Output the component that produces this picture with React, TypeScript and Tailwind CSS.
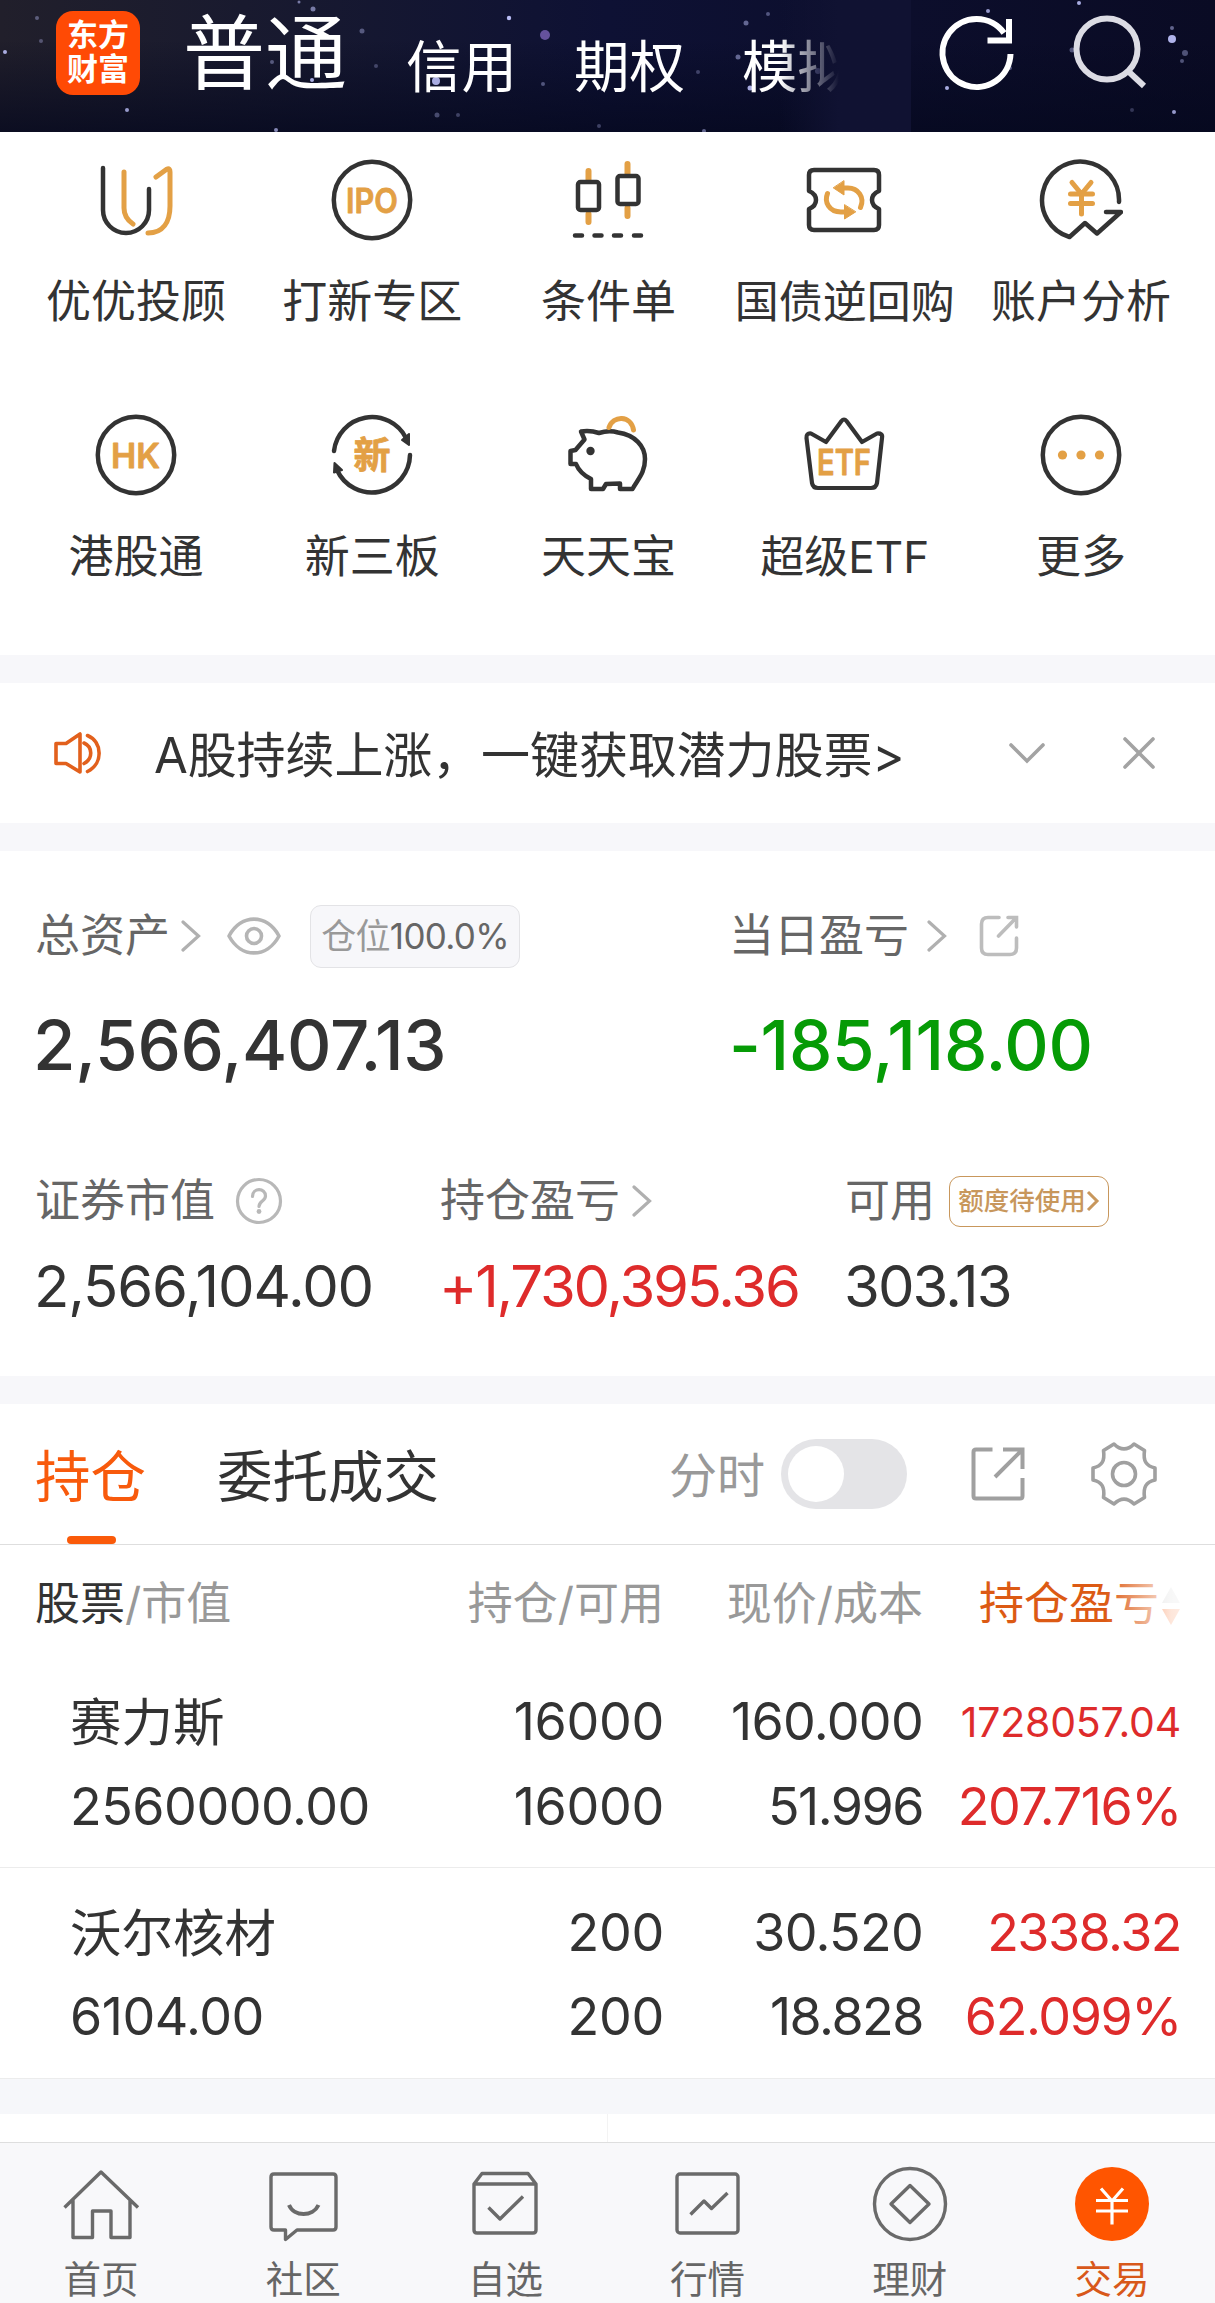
import type { ReactNode } from 'react';
import clsx from 'clsx';

interface Holding {
    name: string;
    value: string;
    held: string;
    usable: string;
    price: string;
    cost: string;
    profit: string;
    ratio: string;
    compact?: boolean;
}

const DARK = '#333333';
const GOLD = '#e3a045';

const holdings: Holding[] = [
    {
        name: '赛力斯',
        value: '2560000.00',
        held: '16000',
        usable: '16000',
        price: '160.000',
        cost: '51.996',
        profit: '1728057.04',
        ratio: '207.716%',
        compact: true,
    },
    {
        name: '沃尔核材',
        value: '6104.00',
        held: '200',
        usable: '200',
        price: '30.520',
        cost: '18.828',
        profit: '2338.32',
        ratio: '62.099%',
    },
];

// x, y, radius, opacity
const stars: [number, number, number, number][] = [
    [5, 52, 2, 0.9], [37, 18, 2, 0.4], [41, 41, 2, 0.35], [127, 110, 2, 0.8], [276, 130, 2, 0.7],
    [313, 9, 2.5, 0.6], [299, 2, 1.5, 0.6], [362, 31, 2.5, 0.4], [312, 80, 2, 0.9], [272, 62, 2, 0.4],
    [509, 18, 2.2, 1], [436, 81, 4, 0.9], [543, 84, 2, 0.4], [437, 115, 2.5, 0.35], [458, 115, 2, 0.3],
    [599, 126, 2, 0.3], [746, 23, 2.5, 0.5], [768, 14, 2, 0.4], [738, 57, 2.5, 0.5], [750, 88, 2.5, 0.9],
    [698, 72, 2, 0.3], [704, 131, 2, 0.5], [818, 71, 3, 0.6], [988, 11, 2, 0.8], [1079, 3, 2, 0.9],
    [947, 88, 2, 0.9], [1172, 39, 4, 0.95], [1172, 28, 2, 0.5], [1185, 53, 3, 0.4], [1182, 61, 2, 0.4],
    [1174, 112, 2, 0.8], [1072, 50, 2.5, 0.4], [1132, 110, 2, 0.25], [1010, 68, 2, 0.4], [376, 66, 2, 0.3],
];

function MenuIcon({ children }: { children: ReactNode }) {
    return (
        <svg width="84" height="84" viewBox="0 0 84 84" fill="none" stroke={DARK} strokeWidth="4.5" strokeLinecap="round" strokeLinejoin="round">
            {children}
        </svg>
    );
}

function IconText({ x, y, size, width, children }: { x: number; y: number; size: number; width: number; children: string }) {
    return (
        <text
            x={x}
            y={y}
            fill={GOLD}
            stroke={GOLD}
            strokeWidth="0.8"
            fontSize={size}
            textLength={width}
            lengthAdjust="spacingAndGlyphs"
            className="font-semibold"
        >
            {children}
        </text>
    );
}

const menus: { label: string; icon: ReactNode }[] = [
    {
        label: '优优投顾',
        icon: (
            <>
                <path d="M9 10V52A23 23 0 0 0 55 52V31" />
                <g stroke={GOLD} strokeWidth="5">
                    <path d="M30 14V50C30 57 33 62 39 66" />
                    <path d="M62 19L73 11Q76 10 76 14V48C76 64 69 75 54 75" />
                </g>
            </>
        ),
    },
    {
        label: '打新专区',
        icon: (
            <>
                <circle cx="42" cy="42" r="38.2" />
                <IconText x={16} y={54.5} size={34} width={52}>IPO</IconText>
            </>
        ),
    },
    {
        label: '条件单',
        icon: (
            <>
                <g stroke={GOLD} strokeWidth="6">
                    <path d="M22.5 13V22M22.5 56V64" />
                    <path d="M61.5 6V16M61.5 50V58" />
                </g>
                <rect x="12" y="24" width="21" height="28" rx="2.5" />
                <rect x="51.5" y="18" width="21" height="28" rx="2.5" />
                <path d="M9 77.5h7M28.5 77.5h7M48 77.5h7M68 77.5h7" />
            </>
        ),
    },
    {
        label: '国债逆回购',
        icon: (
            <>
                <path d="M11 12H71Q76 12 76 17V33Q69 36 69 42Q69 48 76 51V67Q76 72 71 72H11Q6 72 6 67V51Q13 48 13 42Q13 36 6 33V17Q6 12 11 12Z" />
                <g stroke={GOLD} strokeWidth="5">
                    <path d="M39 30H45C55 30 62 39 57.5 49.5" />
                    <path d="M43 54H38C26 54 21 44 24.5 35.5" />
                </g>
                <path d="M41 23V37L30.5 30Z" fill={GOLD} stroke={GOLD} strokeWidth="1" />
                <path d="M41.5 47V61L52.5 54Z" fill={GOLD} stroke={GOLD} strokeWidth="1" />
            </>
        ),
    },
    {
        label: '账户分析',
        icon: (
            <>
                <path d="M80 44A38.5 38.5 0 1 0 30.5 79L46 65L58 75.5L82 54H67" />
                <g stroke={GOLD} strokeWidth="5">
                    <path d="M33 24.5L42.5 36L52 24.5M42.5 36V56" />
                    <path d="M31.5 36H53.5M31.5 45.5H53.5" />
                </g>
            </>
        ),
    },
    {
        label: '港股通',
        icon: (
            <>
                <circle cx="42" cy="42" r="38.2" />
                <IconText x={17} y={54.5} size={34} width={49}>HK</IconText>
            </>
        ),
    },
    {
        label: '新三板',
        icon: (
            <>
                <path d="M4 38A38.2 38.2 0 0 1 76 25" />
                <path d="M80 42A38.2 38.2 0 0 1 7 57" />
                <path d="M79 21V32L72 27Z" fill={DARK} strokeWidth="2" />
                <path d="M4.5 50L12 57L4 59.5Z" fill={DARK} strokeWidth="2" />
                <IconText x={23.5} y={55.5} size={37} width={37}>新</IconText>
            </>
        ),
    },
    {
        label: '天天宝',
        icon: (
            <>
                <path d="M4.5 38L9.5 37L18.5 26.5L15 18.5Q24 17 33 20Q43 17 52 19.5C69 22 79 33 79 46C79 60 72 66 66.5 76H54V70.5L40 71L37 76H25V66C17 62 12 56 10 51H4.5Z" />
                <circle cx="24.5" cy="38" r="4.2" fill={DARK} stroke="none" />
                <path d="M43 14.5C47 2 65 2 67.5 17" stroke={GOLD} strokeWidth="5" />
            </>
        ),
    },
    {
        label: '超级ETF',
        icon: (
            <>
                <path d="M8 20.5L23 29L38.5 8Q41 5 43.5 8L59 29L74 20.5Q80 20 79 25L74 70Q73 75 68 75H15Q10 75 9 70L3.5 25Q3 20 8 20.5Z" strokeWidth="4.2" />
                <IconText x={14} y={62} size={36} width={54}>ETF</IconText>
            </>
        ),
    },
    {
        label: '更多',
        icon: (
            <>
                <circle cx="42" cy="42" r="38.2" />
                <g fill={GOLD} stroke="none">
                    <circle cx="23.5" cy="42" r="4.6" />
                    <circle cx="42" cy="42" r="4.6" />
                    <circle cx="60.5" cy="42" r="4.6" />
                </g>
            </>
        ),
    },
];

const navs: { label: string; icon: ReactNode; active?: boolean }[] = [
    {
        label: '首页',
        icon: <path d="M3.5 43.5L40 8L77 43.5M12 36V73.5H31.5V47H50V73.5H69V36" strokeLinecap="butt" />,
    },
    {
        label: '社区',
        icon: (
            <>
                <path d="M11 10H70Q73 10 73 13V63Q73 66 70 66H34L22.5 75.5V66H11Q8 66 8 63V13Q8 10 11 10Z" />
                <path d="M26 41C31 53 50 53 55.5 41" strokeWidth="4" strokeLinecap="butt" />
            </>
        ),
    },
    {
        label: '自选',
        icon: (
            <>
                <path d="M9 20L17 9.5H63L71 20V66Q71 69 68 69H12Q9 69 9 66ZM9 20H71" />
                <path d="M23.5 43.5L35 55L58 32.5" />
            </>
        ),
    },
    {
        label: '行情',
        icon: (
            <>
                <rect x="9" y="10" width="61" height="59" rx="3" />
                <path d="M22.5 50.5L36 37L43.5 44.5L59.5 29" />
            </>
        ),
    },
    {
        label: '理财',
        icon: (
            <>
                <circle cx="40" cy="40" r="35.5" />
                <path d="M40 21.5L59 40L40 58.5L21 40Z" />
            </>
        ),
    },
    {
        label: '交易',
        active: true,
        icon: (
            <>
                <circle cx="40" cy="40" r="37" fill="#ff5500" stroke="none" />
                <path d="M29 24.5L40 37L51 24.5M24 36.5H56M24 47H56M40 37V60.5" stroke="#ffffff" strokeWidth="3.2" strokeLinecap="butt" />
            </>
        ),
    },
];

function ChevronRight() {
    return (
        <svg width="20" height="32" viewBox="0 0 20 32" fill="none" stroke="#b0b0b0" strokeWidth="3.2" strokeLinecap="round">
            <path d="M2 2L17.5 16L2 30" />
        </svg>
    );
}

function Header() {
    return (
        <header className="relative h-[132px] overflow-hidden bg-linear-to-r from-[#211f2b] via-[#0e1134] to-[#0a0b24]">
            <svg className="absolute inset-0" width="1215" height="132">
                <defs>
                    <linearGradient id="shade" x1="0" y1="0" x2="0" y2="1">
                        <stop offset="0.3" stopColor="#05081e" stopOpacity="0" />
                        <stop offset="1" stopColor="#05081e" stopOpacity="0.75" />
                    </linearGradient>
                </defs>
                <rect width="1215" height="132" fill="url(#shade)" />
                {stars.map(([x, y, r, o]) => (
                    <circle key={`${x}-${y}`} cx={x} cy={y} r={r} fill="#b9bdf5" opacity={o} />
                ))}
                <circle cx="545" cy="35" r="5" fill="#7a63b8" opacity="0.8" />
            </svg>
            <div className="relative flex h-full text-white">
                <div className="mt-[11px] ml-14 flex size-[84px] flex-col items-center justify-center rounded-[17px] bg-[#ff4a05] pb-[2px] text-[31px] leading-[34px] font-bold">
                    <span>东方</span>
                    <span>财富</span>
                </div>
                <span className="mt-[13px] ml-[43px] text-[82px] leading-[82px]">普通</span>
                <span className="mt-[37px] ml-[59px] text-[55.5px] leading-[60px]">信用</span>
                <span className="mt-[37px] ml-[57px] text-[55.5px] leading-[60px]">期权</span>
                <span className="mt-[37px] ml-[57px] text-[55.5px] leading-[60px]">模拟</span>
            </div>
            <div className="absolute top-0 left-[780px] h-full w-[131px] bg-linear-to-r from-transparent via-[#101232] via-45% to-[#101232]" />
            <svg className="absolute top-0 left-[930px]" width="230" height="110" viewBox="0 0 230 110" fill="none" stroke="#ffffff" strokeWidth="6">
                <path d="M80.5 54A34 34 0 1 1 74 33" />
                <path d="M79 19V40.5H57.5" />
                <g stroke="#dcdce4">
                    <circle cx="177" cy="49" r="30.5" />
                    <path d="M198 71L214 86" />
                </g>
            </svg>
        </header>
    );
}

function MenuGrid() {
    return (
        <section className="grid h-[523px] grid-cols-5 content-start gap-y-[54px] pt-[26px] pr-4 pl-[18px]">
            {menus.map((m) => (
                <div key={m.label} className="flex h-[201px] flex-col items-center">
                    <MenuIcon>{m.icon}</MenuIcon>
                    <span className={clsx('mt-7 leading-[64px] whitespace-nowrap', m.label.length > 4 ? 'text-[44px]' : 'text-[45px]')}>{m.label}</span>
                </div>
            ))}
        </section>
    );
}

function Notice() {
    return (
        <section className="relative flex h-[140px] items-center">
            <svg className="ml-[52px] shrink-0" width="52" height="48" viewBox="0 0 52 48" fill="none" stroke="#e2601c" strokeWidth="3.6" strokeLinecap="round">
                <path d="M4 14.5H14L28 5V43L14 34.5H4Z" strokeLinejoin="round" />
                <path d="M32 14C41 18 41 30 32 34.5" />
                <path d="M35.5 6.5C51 13 51 35 35.5 42.5" />
            </svg>
            <span className="mt-[5px] ml-[50px] text-[49px] tracking-[-0.1px]">A股持续上涨，一键获取潜力股票&gt;</span>
            <svg className="absolute left-[1005px]" width="154" height="40" viewBox="0 0 154 40" fill="none" stroke="#a3a3a3" strokeWidth="3.6" strokeLinecap="round">
                <path d="M6 12L22 28L38 12" />
                <path d="M120 6L148 34M148 6L120 34" />
            </svg>
        </section>
    );
}

function Assets() {
    return (
        <section className="h-[525px] pt-[53px] text-[45px] text-[#666]">
            <div className="flex h-16">
                <div className="flex w-[695px] items-center pl-[35px]">
                    <span>总资产</span>
                    <span className="ml-[11px]"><ChevronRight /></span>
                    <svg className="ml-[26px]" width="54" height="40" viewBox="0 0 54 40" fill="none" stroke="#b5b5b5" strokeWidth="3.6">
                        <path d="M2 20C14 -2.5 40 -2.5 52 20C40 42.5 14 42.5 2 20Z" strokeLinejoin="round" />
                        <circle cx="27" cy="20" r="7.5" />
                    </svg>
                    <span className="ml-[29px] flex h-[63px] w-[210px] items-center justify-center rounded-[11px] border border-[#e3e3e6] bg-[#f7f7fa] text-[35px] tracking-[-0.7px]">
                        <span className="text-[#999]">仓位</span>100.0%
                    </span>
                </div>
                <div className="flex items-center pl-[34px]">
                    <span>当日盈亏</span>
                    <span className="ml-[18px]"><ChevronRight /></span>
                    <svg className="ml-[32px]" width="40" height="42" viewBox="0 0 40 42" fill="none" stroke="#bdbdbd" strokeWidth="3.6" strokeLinecap="round">
                        <path d="M20 2.5H9Q2.5 2.5 2.5 9V33Q2.5 39.5 9 39.5H31Q37.5 39.5 37.5 33V23" />
                        <path d="M29 2.5H37.5V12M37 3L19.5 21" />
                    </svg>
                </div>
            </div>
            <div className="mt-[32px] flex text-[69px] leading-[90px] font-medium">
                <span className="w-[695px] pl-[33px] tracking-[-0.3px] text-[#333]">2,566,407.13</span>
                <span className="pl-[34px] tracking-[-0.3px] text-[#069b06]">-185,118.00</span>
            </div>
            <div className="mt-[79px] grid grid-cols-[405px_405px_1fr]">
                <div className="pl-[34px]">
                    <div className="flex h-16 items-center">
                        <span className="pl-px">证券市值</span>
                        <svg className="ml-5" width="48" height="48" viewBox="0 0 48 48" fill="none" stroke="#b8b8b8" strokeWidth="3.2">
                            <circle cx="24" cy="24" r="21.5" />
                            <path d="M17.5 19.5C17.5 10.5 30.5 10.5 30.5 19C30.5 24 24 24 24 29.5" strokeLinecap="round" />
                            <circle cx="24" cy="34.5" r="2.4" fill="#b8b8b8" stroke="none" />
                        </svg>
                    </div>
                    <div className="mt-[17px] text-[58px] leading-[72px] tracking-[-1.1px] text-[#333]">2,566,104.00</div>
                </div>
                <div className="pl-[34px]">
                    <div className="flex h-16 items-center">
                        <span className="pl-px">持仓盈亏</span>
                        <span className="ml-[12px]"><ChevronRight /></span>
                    </div>
                    <div className="mt-[17px] text-[58px] leading-[72px] tracking-[-2.2px] whitespace-nowrap text-[#de2b2b]">+1,730,395.36</div>
                </div>
                <div className="pl-[34px]">
                    <div className="flex h-16 items-center">
                        <span className="pl-px">可用</span>
                        <span className="ml-[14px] flex h-[51px] w-[160px] items-center justify-center rounded-[11px] border-[1.5px] border-[#c8975c] text-[25.5px] font-medium text-[#c8975c]">
                            额度待使用
                            <svg width="14" height="24" viewBox="0 0 14 24" fill="none" stroke="#c8975c" strokeWidth="3">
                                <path d="M2 3L11 12L2 21" />
                            </svg>
                        </span>
                    </div>
                    <div className="mt-[17px] text-[58px] leading-[72px] tracking-[-1.9px] text-[#333]">303.13</div>
                </div>
            </div>
        </section>
    );
}

function Tabs() {
    return (
        <div className="flex h-[141px] items-center border-b border-[#dedede] pl-[35px] text-[55.5px]">
            <div className="relative flex h-full items-center pt-[5px] text-[#f85a0c]">
                持仓
                <span className="absolute bottom-0 left-8 h-2 w-[49px] rounded-full bg-[#fa5a0a]" />
            </div>
            <span className="mt-[5px] ml-[71px]">委托成交</span>
            <span className="mt-[3px] ml-[230px] text-[48px] text-[#999]">分时</span>
            <span className="ml-4 flex h-[70px] w-[126px] items-center rounded-full bg-[#e4e4e7] pl-[7px]">
                <span className="size-14 rounded-full bg-white" />
            </span>
            <svg className="ml-[64px]" width="54" height="54" viewBox="0 0 54 54" fill="none" stroke="#a0a0a0" strokeWidth="4">
                <path d="M21.5 2.5H5Q2.5 2.5 2.5 5V49Q2.5 51.5 5 51.5H49Q51.5 51.5 51.5 49V31" />
                <path d="M32 2.5H51.5V22M51 3L24 30" />
            </svg>
            <svg className="ml-[65px]" width="68" height="66" viewBox="-34 -33 68 66" fill="none" stroke="#a0a0a0" strokeWidth="3.6" strokeLinejoin="round">
                <path d="M-10 -30Q0 -20 10 -30L20.5 -23.5C19 -13 22 -8 31 -6V6C22 8 19 13 20.5 23.5L10 30Q0 20 -10 30L-20.5 23.5C-19 13 -22 8 -31 6V-6C-22 -8 -19 -13 -20.5 -23.5Z" />
                <circle r="11.5" />
            </svg>
        </div>
    );
}

const COLS = 'grid grid-cols-[404px_260px_259px_258px]';

function HoldingTable() {
    return (
        <section>
            <div className={clsx(COLS, 'relative h-[117px] items-center text-right text-[45px] text-[#999]')}>
                <span className="pl-[35px] text-left"><span className="text-[#333]">股票</span>/市值</span>
                <span>持仓/可用</span>
                <span>现价/成本</span>
                <span className="flex items-center justify-end text-[#dc5a14]">
                    持仓盈亏
                    <svg className="mt-1 ml-[2px]" width="20" height="40" viewBox="0 0 20 40">
                        <path d="M10 1L19 17H1Z" fill="#cccccc" />
                        <path d="M10 39L19 23H1Z" fill="#f85a0c" />
                    </svg>
                </span>
                <span className="absolute top-0 right-0 h-full w-[110px] bg-linear-to-r from-white/0 via-white/85 via-60% to-white" />
            </div>
            {holdings.map((h) => (
                <div
                    key={h.name}
                    className={clsx(COLS, 'items-center border-b border-[#ececec] text-right text-[52px] leading-[84px]', h.compact ? 'h-[206px] pt-[18px] pb-[18px]' : 'h-[211px] pt-[23px] pb-[20px]')}
                >
                    <span className="pl-[70px] text-left text-[51.5px]">{h.name}</span>
                    <span className="tracking-[-0.3px]">{h.held}</span>
                    <span className="tracking-[-0.7px]">{h.price}</span>
                    <span className={clsx('text-[#de2b2b]', h.compact ? 'text-[41px] tracking-[-0.2px]' : 'tracking-[-1.5px]')}>{h.profit}</span>
                    <span className="pl-[70px] text-left tracking-[-0.5px]">{h.value}</span>
                    <span className="tracking-[-0.3px]">{h.usable}</span>
                    <span className="tracking-[-1.5px]">{h.cost}</span>
                    <span className="tracking-[-1.4px] text-[#de2b2b]">{h.ratio}</span>
                </div>
            ))}
        </section>
    );
}

function BottomNav() {
    return (
        <nav className="grid h-[161px] grid-cols-6 border-t border-[#dedede] bg-[#f8f8fa] pr-[2px]">
            {navs.map((n) => (
                <div key={n.label} className={clsx('flex flex-col items-center pt-[21px] text-[37.5px]', n.active ? 'text-[#d8581a]' : 'text-[#666]')}>
                    <svg width="80" height="80" viewBox="0 0 80 80" fill="none" stroke="#6a6a6a" strokeWidth="3.4" strokeLinejoin="round">
                        {n.icon}
                    </svg>
                    <span className="mt-[11px] leading-[50px]">{n.label}</span>
                </div>
            ))}
        </nav>
    );
}

const Gap = () => <div className="h-7 bg-[#f7f7fa]" />;

export default function App() {
    return (
        <div className="relative h-[2303px] w-[1215px] overflow-hidden bg-white font-[Inter,'Noto_Sans_CJK_SC',sans-serif] text-[#333]">
            <Header />
            <MenuGrid />
            <Gap />
            <Notice />
            <Gap />
            <Assets />
            <Gap />
            <Tabs />
            <HoldingTable />
            <div className="h-[35px] bg-[#f6f7fa]" />
            <div className="flex h-7">
                <div className="w-[608px] border-r border-[#f3f3f3]" />
            </div>
            <BottomNav />
        </div>
    );
}
